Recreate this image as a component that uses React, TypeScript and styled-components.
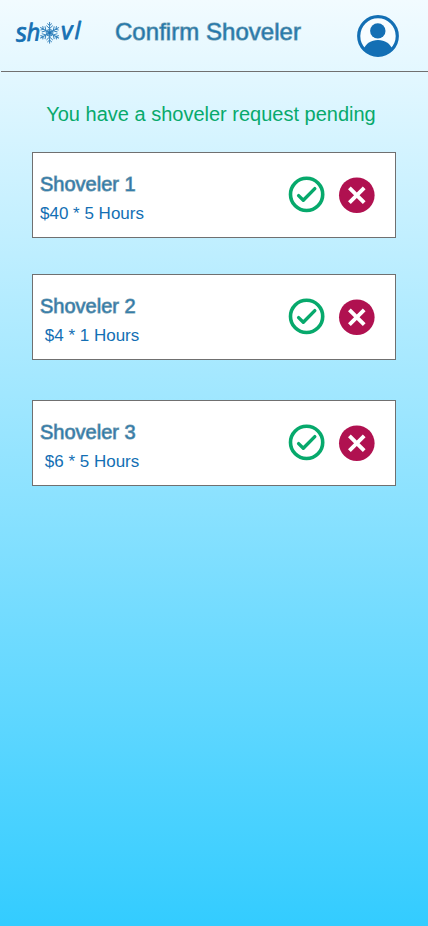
import React from "react";
import styled, { createGlobalStyle } from "styled-components";

const GlobalStyle = createGlobalStyle`
  *, *::before, *::after { box-sizing: border-box; }
  body { margin: 0; font-family: "Liberation Sans", Arial, sans-serif; }
`;

const Screen = styled.div`
  display: flex;
  flex-direction: column;
  width: 100%;
  height: 926px;
  background: linear-gradient(180deg, #f2fbff 0%, #33ccff 100%);
`;

const Header = styled.header`
  display: flex;
  align-items: flex-start;
  height: 72px;
  margin-left: 1px;
  border-bottom: 1px solid #707070;
`;

const Logo = styled.svg`
  width: 72px;
  height: 34px;
  margin: 15px 0 0 12px;
  font: italic 400 25px "Open Sans", sans-serif;
  fill: #1670b3;
  stroke: #1670b3;
  stroke-width: 0.8;
  stroke-linejoin: round;
  overflow: visible;
`;

const Title = styled.h1`
  flex: 1;
  margin: 18px 0 0 30px;
  font-size: 24px;
  line-height: 28px;
  font-weight: 400;
  letter-spacing: 0.04px;
  color: #1673b3;
  -webkit-text-stroke: 1px rgba(84, 140, 164, 0.78);
`;

const Avatar = styled.svg`
  width: 42px;
  height: 42px;
  margin: 15px 29px 0 0;
`;

const Notice = styled.p`
  margin: 31px 0 0;
  padding-right: 6px;
  text-align: center;
  font-size: 20px;
  line-height: 23px;
  color: #07a96c;
`;

const List = styled.main`
  display: flex;
  flex-direction: column;
  padding: 26px 32px 0;
`;

const Card = styled.article<{ $gap: number }>`
  display: flex;
  height: 86px;
  margin-bottom: ${(p) => p.$gap}px;
  padding: 0 20px 0 7px;
  background: #fff;
  border: 1px solid #707070;
`;

const Details = styled.div`
  display: flex;
  flex-direction: column;
  align-items: center;
  margin-right: auto;
  padding-top: 20px;
`;

const Name = styled.h2`
  width: 104px;
  margin: 0;
  font-size: 20px;
  line-height: 23px;
  font-weight: 400;
  color: #1673b3;
  -webkit-text-stroke: 1px rgba(92, 140, 164, 0.82);
`;

const Rate = styled.p`
  margin: 8px 0 0;
  font-size: 17px;
  line-height: 20px;
  white-space: nowrap;
  color: #136fb4;
`;

const Actions = styled.div`
  display: flex;
  gap: 14px;
  padding-top: 23px;
`;

const IconButton = styled.button`
  width: 36px;
  height: 36px;
  margin: 0;
  padding: 0;
  border: 0;
  background: none;
  svg { display: block; overflow: visible; }
`;

const requests = [
  { name: "Shoveler 1", rate: "$40 * 5 Hours", gap: 36 },
  { name: "Shoveler 2", rate: "$4 * 1 Hours", gap: 40 },
  { name: "Shoveler 3", rate: "$6 * 5 Hours", gap: 0 },
];

const Snowflake = () => (
  <g transform="translate(36.6 17.8)" fill="none" stroke="#3583bd" strokeWidth="1">
    {[0, 60, 120, 180, 240, 300].map((a) => (
      <path key={a} transform={`rotate(${a})`} d="M0 0V-10.8M-2.3-9.3 0-7.2 2.3-9.3M-3.2-7.2 0-4.2 3.2-7.2" />
    ))}
    <circle r="3.4" fill="#3583bd" fillOpacity="0.5" strokeWidth="0.9" />
    <circle r="1.6" fill="#1670b3" />
  </g>
);

export default function App() {
  return (
    <>
      <GlobalStyle />
      <Screen>
        <Header>
          <Logo viewBox="0 0 72 34" aria-label="shovl">
            <text x="3.2" y="26.8" fontSize="26" transform="rotate(-4 3 26.8)">s</text>
            <text x="13.8" y="26" fontSize="24" transform="rotate(-2 13.4 26)">h</text>
            <Snowflake />
            <text x="48.4" y="24.6" fontSize="25" transform="rotate(-3 48.4 24.6)">v</text>
            <text x="61.6" y="23.8" fontSize="24">l</text>
          </Logo>
          <Title>Confirm Shoveler</Title>
          <Avatar viewBox="0 0 42 42">
            <defs>
              <clipPath id="face"><circle cx="21" cy="21" r="20" /></clipPath>
            </defs>
            <circle cx="21" cy="21" r="19.3" fill="#fff" fillOpacity="0.6" stroke="#136fb4" strokeWidth="3.2" />
            <circle cx="20.8" cy="15.9" r="7.7" fill="#136fb4" />
            <path clipPath="url(#face)" d="M6.5 34.5C9 28.5 14 25 21 25s12 3.5 14.5 9.5v7.5H6.5z" fill="#136fb4" />
          </Avatar>
        </Header>
        <Notice>You have a shoveler request pending</Notice>
        <List>
          {requests.map((r) => (
            <Card key={r.name} $gap={r.gap}>
              <Details>
                <Name>{r.name}</Name>
                <Rate>{r.rate}</Rate>
              </Details>
              <Actions>
                <IconButton aria-label="Accept">
                  <svg width="36" height="36" viewBox="0 0 36 36" fill="none" stroke="#07a96c">
                    <circle cx="17.6" cy="18.4" r="16.1" strokeWidth="3.6" />
                    <path d="M9.6 19.6l4.7 4.7L25.8 12.6" strokeWidth="3.4" strokeLinecap="round" strokeLinejoin="round" />
                  </svg>
                </IconButton>
                <IconButton aria-label="Decline">
                  <svg width="36" height="36" viewBox="0 0 36 36">
                    <circle cx="17.8" cy="19.2" r="17.8" fill="#b01150" />
                    <path d="M10.4 11.8l14.8 14.8M25.2 11.8L10.4 26.6" stroke="#fff" strokeWidth="3.9" />
                  </svg>
                </IconButton>
              </Actions>
            </Card>
          ))}
        </List>
      </Screen>
    </>
  );
}
